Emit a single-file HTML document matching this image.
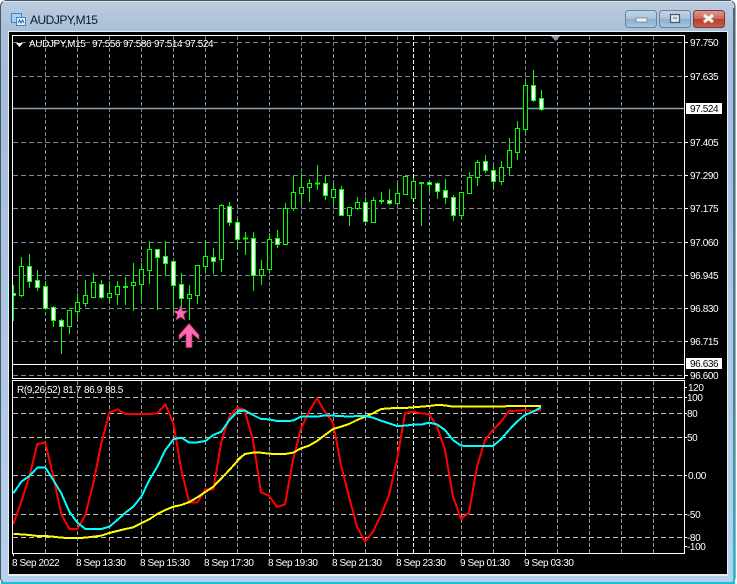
<!DOCTYPE html>
<html><head><meta charset="utf-8"><title>AUDJPY,M15</title>
<style>
html,body{margin:0;padding:0;background:#fff;width:737px;height:584px;overflow:hidden}
svg{display:block}
text{font-family:"Liberation Sans",sans-serif;font-size:10px;letter-spacing:-.4px;fill:#fff}
</style></head><body>
<svg width="737" height="584" viewBox="0 0 737 584" xmlns="http://www.w3.org/2000/svg">
<defs>
<linearGradient id="tb" x1="0" y1="0" x2="0" y2="1"><stop offset="0" stop-color="#bccde0"/><stop offset=".05" stop-color="#a9c0d8"/><stop offset=".12" stop-color="#a2bdd9"/><stop offset="1" stop-color="#b6d1ee"/></linearGradient>
<linearGradient id="edge" x1="0" y1="0" x2="0" y2="1"><stop offset="0" stop-color="#4a6578"/><stop offset=".7" stop-color="#3f8aa0"/><stop offset="1" stop-color="#16c4d8"/></linearGradient>
<linearGradient id="btn" x1="0" y1="0" x2="0" y2="1"><stop offset="0" stop-color="#c3d5e7"/><stop offset=".48" stop-color="#a9c2db"/><stop offset=".52" stop-color="#8fadcb"/><stop offset="1" stop-color="#a9c8e2"/></linearGradient>
<linearGradient id="cl" x1="0" y1="0" x2="0" y2="1"><stop offset="0" stop-color="#dc9a8e"/><stop offset=".48" stop-color="#c9695c"/><stop offset=".52" stop-color="#b53e30"/><stop offset="1" stop-color="#c8604e"/></linearGradient>
<clipPath id="main"><rect x="13" y="36" width="671" height="342"/></clipPath>
</defs>

<!-- window -->
<rect x=".5" y=".5" width="734.5" height="583" rx="6" fill="url(#tb)" stroke="#4a5560"/>
<rect x="3" y="1" width="729" height="1" fill="#d8e3ee"/>
<rect x="733" y="8" width="2" height="575" fill="url(#edge)"/>
<rect x="1" y="582" width="734" height="2" fill="#16c4d8"/>
<rect x="8" y="31" width="720" height="545" fill="#e6eef6"/>
<rect x="9" y="32" width="718" height="542" fill="#000"/>

<!-- title icon -->
<rect x="11.5" y="13.5" width="10" height="9" fill="#a9d0f2" stroke="#3f86c8"/>
<rect x="16.5" y="17.5" width="9" height="8" fill="#e4f0fb" stroke="#3f86c8"/>
<path d="M18 23l1.500-3 1.500 3 1.500-3 1.500 3" fill="none" stroke="#35608c"/>
<text x="30" y="24" style="font-size:12px;letter-spacing:-.5px;fill:#0c1a2a">AUDJPY,M15</text>

<!-- buttons -->
<rect x="625.500" y="10.500" width="31" height="17" rx="3" fill="url(#btn)" stroke="#6e8298"/>
<rect x="636" y="18" width="11" height="4" fill="#eef2f6" stroke="#52647a" stroke-width=".6"/>
<rect x="659.500" y="10.500" width="31" height="17" rx="3" fill="url(#btn)" stroke="#6e8298"/>
<rect x="670.500" y="14.500" width="9" height="8" fill="#dfe7ef" stroke="#46586c" stroke-width="1.200"/>
<rect x="673" y="17" width="4" height="2" fill="#8ea8c2"/>
<rect x="693.500" y="10.500" width="31" height="17" rx="3" fill="url(#cl)" stroke="#7a3a38"/>
<path d="M704 15l9 7M713 15l-9 7" stroke="#f4f0ec" stroke-width="3.200"/>

<!-- main grid -->
<g stroke="#778899" stroke-dasharray="4 2" fill="none" shape-rendering="crispEdges">
<path d="M45.500 36V378M77.500 36V378M109.500 36V378M141.500 36V378M173.500 36V378M205.500 36V378M237.500 36V378M269.500 36V378M301.500 36V378M333.500 36V378M365.500 36V378M397.500 36V378M429.500 36V378M461.500 36V378M493.500 36V378M525.500 36V378M557.500 36V378M589.500 36V378M621.500 36V378M653.500 36V378"/>
</g>
<path shape-rendering="crispEdges" d="M13 42.500H684M13 76.500H684M13 142.500H684M13 175.500H684M13 208.500H684M13 242.500H684M13 275.500H684M13 308.500H684M13 341.500H684M13 375.500H684" stroke="#778899" stroke-dasharray="5 3" fill="none"/>
<path shape-rendering="crispEdges" d="M413.500 36V378" stroke="#fff" stroke-dasharray="4 2" fill="none"/>
<path d="M13 108.500H684" stroke="#8fa0b0" stroke-width="1.400"/>
<path shape-rendering="crispEdges" d="M13 364.500H684" stroke="#fff"/>
<path d="M550 35h11l-5.500 6z" fill="#8f9aa5"/>

<!-- candles -->
<g clip-path="url(#main)" shape-rendering="crispEdges">
<path fill="none" stroke="#00ff00" d="M13.500 285V321M21.500 257V297M29.500 254V288M37.500 270V291M45.500 281V310M53.500 306V327M61.500 319V354M69.500 310V334M77.500 293V319M85.500 280V307M93.500 273V298M101.500 280V299M109.500 281V302M117.500 281V305M125.500 277V305M133.500 263V311M141.500 263V301M149.500 241V284M157.500 249V310M165.500 241V276M173.500 261V313M181.500 273V309M189.500 285V320M197.500 265V304M205.500 240V272M213.500 248V274M221.500 204V272M229.500 202V226M237.500 219V248M245.500 232V255M253.500 232V291M261.500 260V285M269.500 233V273M277.500 230V248M285.500 203V245M293.500 176V211M301.500 173V205M309.500 179V202M317.500 165V190M325.500 175V200M333.500 183V206M341.500 186V216M349.500 207V226M357.500 197V210M365.500 197V222M373.500 197V223M381.500 192V204M389.500 189V205M397.500 183V203M405.500 175V194M413.500 178V198M421.500 182V226M429.500 182V194M437.500 182V199M445.500 179V204M453.500 195V221M461.500 192V219M469.500 172V194M477.500 160V186M485.500 155V173M493.500 166V190M501.500 161V185M509.500 138V175M517.500 121V160M525.500 82V133M533.500 70V102M541.500 90V111"/>
<!-- hollow -->
<path fill="#000" stroke="#00ff00" d="M19.500 266.500h4v29h-4zM67.500 310.500h4v16h-4zM75.500 302.500h4v9h-4zM83.500 295.500h4v8h-4zM91.500 282.500h4v15h-4zM107.500 293.500h4v4h-4zM115.500 286.500h4v8h-4zM131.500 282.500h4v3h-4zM139.500 269.500h4v15h-4zM147.500 249.500h4v21h-4zM187.500 294.500h4v4h-4zM195.500 265.500h4v30h-4zM203.500 256.500h4v10h-4zM219.500 205.500h4v54h-4zM259.500 269.500h4v6h-4zM267.500 239.500h4v30h-4zM283.500 208.500h4v36h-4zM291.500 192.500h4v16h-4zM299.500 187.500h4v6h-4zM307.500 183.500h4v4h-4zM331.500 189.500h4v8h-4zM347.500 207.500h4v8h-4zM355.500 202.500h4v6h-4zM371.500 200.500h4v22h-4zM395.500 193.500h4v10h-4zM403.500 176.500h4v18h-4zM411.500 181.500h4v17h-4zM459.500 192.500h4v23h-4zM467.500 177.500h4v16h-4zM475.500 162.500h4v15h-4zM499.500 167.500h4v14h-4zM507.500 150.500h4v17h-4zM515.500 128.500h4v24h-4zM523.500 85.500h4v44h-4z"/>
<!-- solid -->
<path fill="#fff" stroke="#00ff00" d="M11.500 293.500h4v2h-4zM27.500 266.500h4v15h-4zM35.500 280.500h4v7h-4zM43.500 286.500h4v22h-4zM51.500 307.500h4v13h-4zM59.500 320.500h4v6h-4zM99.500 284.500h4v13h-4zM155.500 249.500h4v8h-4zM163.500 256.500h4v7h-4zM171.500 261.500h4v24h-4zM179.500 284.500h4v14h-4zM211.500 257.500h4v4h-4zM227.500 206.500h4v16h-4zM235.500 222.500h4v17h-4zM251.500 238.500h4v37h-4zM275.500 238.500h4v6h-4zM323.500 183.500h4v12h-4zM339.500 189.500h4v26h-4zM363.500 202.500h4v19h-4zM387.500 200.500h4v3h-4zM427.500 182.500h4v2h-4zM435.500 183.500h4v8h-4zM443.500 190.500h4v7h-4zM451.500 197.500h4v18h-4zM483.500 161.500h4v9h-4zM491.500 170.500h4v11h-4zM531.500 85.500h4v15h-4zM539.500 98.500h4v11h-4z"/>
<!-- dashes -->
<path stroke="#00ff00" stroke-width="2" d="M123 287h5M243 238.500h5M315 183.500h5M379 201h5M419 183h5"/>
</g>

<!-- signals -->
<path d="M180.500 306l2 5h5l-4 3.500 1.500 5.500-4.500-3-4.500 3 1.500-5.500-4-3.500h5z" fill="#ff69b4" stroke="#b8406e" stroke-width=".7"/>
<path d="M189 323.500l10 11.500v4.500l-7-6v14h-6v-14l-7 6v-4.500z" fill="#ff69b4" stroke="#b4305c" stroke-width=".7"/>

<!-- main frame -->
<path shape-rendering="crispEdges" d="M12.500 35.500H684.500V378.500H12.500Z" fill="none" stroke="#fff"/>

<!-- legend -->
<path d="M16 43h7l-3.500 4z" fill="#fff"/>
<text x="29" y="47">AUDJPY,M15</text>
<text x="92" y="47">97.556</text>
<text x="123" y="47">97.586</text>
<text x="154" y="47">97.514</text>
<text x="185" y="47">97.524</text>

<!-- main axis -->
<path shape-rendering="crispEdges" stroke="#fff" d="M685 42.500h3M685 76.500h3M685 142.500h3M685 175.500h3M685 208.500h3M685 242.500h3M685 275.500h3M685 308.500h3M685 341.500h3M685 375.500h3"/>
<text x="690" y="46">97.750</text>
<text x="690" y="80">97.635</text>
<rect x="686" y="103" width="36" height="11" fill="#fff"/>
<text x="690" y="112" style="fill:#000">97.524</text>
<text x="690" y="146">97.405</text>
<text x="690" y="179">97.290</text>
<text x="690" y="212">97.175</text>
<text x="690" y="246">97.060</text>
<text x="690" y="279">96.945</text>
<text x="690" y="312">96.830</text>
<text x="690" y="345">96.715</text>
<rect x="686" y="358" width="36" height="11" fill="#fff"/>
<text x="690" y="367" style="fill:#000">96.636</text>
<text x="690" y="379">96.600</text>

<!-- sub window -->
<g stroke="#9a9a9a" stroke-dasharray="4 2" fill="none" shape-rendering="crispEdges">
<path d="M45.500 381V553M77.500 381V553M109.500 381V553M141.500 381V553M173.500 381V553M205.500 381V553M237.500 381V553M269.500 381V553M301.500 381V553M333.500 381V553M365.500 381V553M397.500 381V553M429.500 381V553M461.500 381V553M493.500 381V553M525.500 381V553M557.500 381V553M589.500 381V553M621.500 381V553M653.500 381V553"/>
</g>
<path shape-rendering="crispEdges" d="M413.500 381V553" stroke="#fff" stroke-dasharray="4 2" fill="none"/>
<path shape-rendering="crispEdges" d="M13 397.500H684M13 413.500H684M13 437.500H684M13 475.500H684M13 514.500H684M13 537.500H684" stroke="#c0c0c0" stroke-dasharray="5 3" fill="none"/>

<!-- lines left part -->
<g fill="none" stroke-width="6" stroke-linejoin="round" shape-rendering="crispEdges" transform="translate(0,370) scale(.33333)">
<polyline stroke="#ff0000" points="40,462 64,395 88,320 112,222 136,218 160,320 184,433 208,477 232,477 256,435 280,340 304,220 328,128 352,118 376,132 400,132 424,132 448,132 472,130 496,103 520,160 544,300 568,398 592,398 616,358 640,358 664,215 688,140 712,113 736,120"/>
<polyline stroke="#ffff00" points="40,492 64,493 88,495 112,498 136,498 160,500 184,503 208,504 232,504 256,503 280,500 304,497 328,489 352,483 376,477 400,472 424,460 448,448 472,432 496,420 520,410 544,405 568,396 592,382 616,366 640,350 664,325 688,300 712,273 736,250"/>
<polyline stroke="#00ffff" points="40,370 64,335 88,318 112,293 136,293 160,330 184,370 208,425 232,458 256,477 280,477 304,477 328,470 352,450 376,428 400,410 424,380 448,330 472,290 496,240 520,208 544,203 568,218 592,217 616,213 640,195 664,185 688,150 712,125 736,122"/>
</g>
<!-- lines right part -->
<g fill="none" stroke-width="6" stroke-linejoin="round" shape-rendering="crispEdges" transform="translate(240,380) scale(.33333)">
<polyline stroke="#ff0000" points="-9,84 15,95 39,180 63,337 87,347 111,381 135,373 159,240 183,145 207,95 231,55 255,95 279,128 303,255 327,350 351,440 375,485 399,455 423,405 447,345 471,240 495,100 519,95 543,100 567,102 591,140 615,210 639,350 663,417 687,398 711,260 735,180 759,150 783,125 807,93 831,92 855,90 879,93 903,90"/>
<polyline stroke="#ffff00" points="-9,240 15,222 39,218 63,218 87,221 111,222 135,222 159,218 183,205 207,197 231,183 255,165 279,147 303,140 327,132 351,120 375,110 399,100 423,87 447,85 471,84 495,84 519,82 543,80 567,78 591,75 615,76 639,80 663,80 687,80 711,80 735,80 759,80 783,80 807,78 831,78 855,78 879,78 903,78"/>
<polyline stroke="#00ffff" points="-9,92 15,92 39,105 63,117 87,118 111,123 135,123 159,122 183,110 207,110 231,110 255,106 279,107 303,108 327,110 351,108 375,108 399,113 423,122 447,130 471,138 495,137 519,134 543,134 567,128 591,133 615,150 639,180 663,197 687,198 711,198 735,198 759,198 783,178 807,150 831,125 855,105 879,95 903,82"/>
</g>

<path shape-rendering="crispEdges" d="M12.500 380.500H684.500V553.500H12.500Z" fill="none" stroke="#fff"/>
<text x="17" y="393">R(9,26,52)</text>
<text x="63" y="393">81.7</text>
<text x="84" y="393">86.9</text>
<text x="105" y="393">88.5</text>

<!-- sub axis -->
<path shape-rendering="crispEdges" stroke="#fff" d="M685 387.500h2M685 397.500h2M685 413.500h2M685 437.500h2M685 475.500h2M685 514.500h2M685 537.500h2M685 546.500h2"/>
<text x="688" y="391">120</text>
<text x="687" y="401">100</text>
<text x="687" y="417">80</text>
<text x="687" y="441">50</text>
<text x="688" y="479">0.00</text>
<text x="687" y="518">-50</text>
<text x="687" y="541">-80</text>
<text x="687" y="550">-100</text>

<!-- time axis -->
<path shape-rendering="crispEdges" stroke="#fff" d="M13.500 553v3M77.500 553v3M141.500 553v3M205.500 553v3M269.500 553v3M333.500 553v3M397.500 553v3M461.500 553v3M525.500 553v3"/>
<text x="12" y="566">8 Sep 2022</text>
<text x="76" y="566">8 Sep 13:30</text>
<text x="140" y="566">8 Sep 15:30</text>
<text x="204" y="566">8 Sep 17:30</text>
<text x="268" y="566">8 Sep 19:30</text>
<text x="332" y="566">8 Sep 21:30</text>
<text x="396" y="566">8 Sep 23:30</text>
<text x="460" y="566">9 Sep 01:30</text>
<text x="524" y="566">9 Sep 03:30</text>
</svg>
</body></html>
